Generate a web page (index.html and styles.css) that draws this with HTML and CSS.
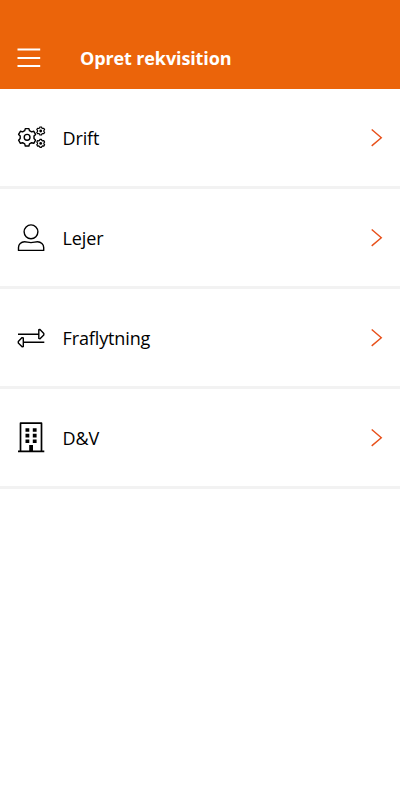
FILE: index.html
```html
<!doctype html>
<html lang="da">
  <head>
    <meta charset="UTF-8" />
    <meta name="viewport" content="width=device-width, initial-scale=1.0" />
    <title>Opret rekvisition</title>
    <link rel="stylesheet" href="styles.css">
  </head>
  <body>
    <header class="header">
      <svg class="menu" viewBox="0 0 24 20">
        <path d="M0.5 1.5h22.7M0.5 10h22.7M0.5 18h22.7" />
      </svg>
      <h1>Opret rekvisition</h1>
    </header>

    <main class="list">
      <a class="row">
        <svg class="icon" viewBox="0 0 40 40">
          <defs>
            <path id="gear" d="M-1.8-8.7H1.8L2.4-6.6L4.5-5.4L6.7-6L8.5-2.9L6.9-1.2V1.2L8.5 2.9L6.7 6L4.5 5.4L2.4 6.6L1.8 8.7H-1.8L-2.4 6.6L-4.5 5.4L-6.7 6L-8.5 2.9L-6.9 1.2V-1.2L-8.5-2.9L-6.7-6L-4.5-5.4L-2.4-6.6Z" />
          </defs>
          <use href="#gear" transform="translate(17.1 19.3)" />
          <circle cx="17.1" cy="19.3" r="2.9" />
          <g class="small">
            <use href="#gear" transform="translate(30.7 13) scale(0.46)" />
            <use href="#gear" transform="translate(30.7 25.4) scale(0.46)" />
          </g>
          <circle class="solid" cx="30.7" cy="13" r="1.4" />
          <circle class="solid" cx="30.7" cy="25.4" r="1.4" />
        </svg>
        <span class="label">Drift</span>
        <svg class="arrow" viewBox="0 0 12 18"><path d="M0.7 0.5L10.3 8.7L0.7 16.9" /></svg>
      </a>
      <a class="row">
        <svg class="icon" viewBox="0 0 40 40">
          <circle cx="21" cy="13.8" r="6.9" />
          <path d="M8.5 32.4V29.5C8.5 26.5 11 23.8 14.5 23.8C17 23.8 18 24.6 21 24.6S25 23.8 27.5 23.8C31 23.8 33.7 26.5 33.7 29.5V32.4Z" />
        </svg>
        <span class="label">Lejer</span>
        <svg class="arrow" viewBox="0 0 12 18"><path d="M0.7 0.5L10.3 8.7L0.7 16.9" /></svg>
      </a>
      <a class="row">
        <svg class="icon" viewBox="0 0 40 40">
          <path d="M8 16.2H28.5M28.8 11.8L30 11.5L33.8 15.5V17L30 20.7L28.8 20.4Z" />
          <path d="M34.3 24.3H13.5M13.3 19.9L12.1 19.6L8.3 23.6V25.1L12.1 28.8L13.3 28.5Z" />
        </svg>
        <span class="label">Fraflytning</span>
        <svg class="arrow" viewBox="0 0 12 18"><path d="M0.7 0.5L10.3 8.7L0.7 16.9" /></svg>
      </a>
      <a class="row">
        <svg class="icon" viewBox="0 0 40 40">
          <path class="thick" d="M10.5 33V5.2H31.5V33M8 33.3H34.3" />
          <path class="solid" d="M15.5 10.2h3.8v3.6h-3.8zM22.8 10.2h3.8v3.6h-3.8zM15.5 15.8h3.8v3.6h-3.8zM22.8 15.8h3.8v3.6h-3.8zM15.5 21.4h3.8v3.6h-3.8zM22.8 21.4h3.8v3.6h-3.8zM19.2 27h3.8v6.5h-3.8z" />
        </svg>
        <span class="label">D&amp;V</span>
        <svg class="arrow" viewBox="0 0 12 18"><path d="M0.7 0.5L10.3 8.7L0.7 16.9" /></svg>
      </a>
    </main>
  </body>
</html>
```
FILE: styles.css
```css
body {
  font-family: "Open Sans", sans-serif;
  background-color: #fff;
  color: #000;
  margin: 0;
}

.header {
  display: flex;
  align-items: center;
  box-sizing: border-box;
  height: 89px;
  padding: 27px 17px 0;
  background-color: #eb640a;
  color: #fff;
}

.header h1 {
  margin: 0 0 0 39px;
  font-size: 18px;
  font-weight: bold;
  letter-spacing: -0.12px;
}

.menu {
  width: 24px;
  height: 20px;
  fill: none;
  stroke: #fff;
  stroke-width: 1.8;
}

.row {
  display: flex;
  align-items: center;
  box-sizing: border-box;
  height: 100px;
  padding: 1px 17px 0 10px;
  border-bottom: 3px solid #f2f2f2;
}

.icon {
  width: 40px;
  height: 40px;
  fill: none;
  stroke: #000;
  stroke-width: 1.4;
  stroke-linejoin: round;
}

.icon .solid {
  fill: #000;
  stroke: none;
}

.icon .thick {
  stroke-width: 1.7;
}

.icon .small {
  stroke-width: 2.6;
}

.label {
  flex: 1;
  margin-left: 12.5px;
  font-size: 18px;
  letter-spacing: -0.12px;
}

.arrow {
  width: 12px;
  height: 18px;
  fill: none;
  stroke: #e8501a;
  stroke-width: 1.4;
}
```
